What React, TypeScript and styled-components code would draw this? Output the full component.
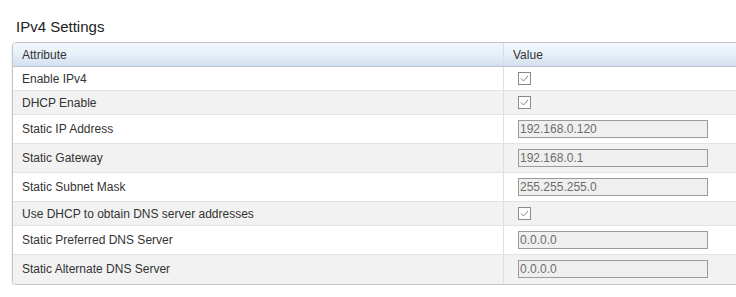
import { createGlobalStyle } from 'styled-components';
import styled from 'styled-components';

type Row =
  | { label: string; kind: 'check' }
  | { label: string; kind: 'text'; value: string };

const rows: Row[] = [
  { label: 'Enable IPv4', kind: 'check' },
  { label: 'DHCP Enable', kind: 'check' },
  { label: 'Static IP Address', kind: 'text', value: '192.168.0.120' },
  { label: 'Static Gateway', kind: 'text', value: '192.168.0.1' },
  { label: 'Static Subnet Mask', kind: 'text', value: '255.255.255.0' },
  { label: 'Use DHCP to obtain DNS server addresses', kind: 'check' },
  { label: 'Static Preferred DNS Server', kind: 'text', value: '0.0.0.0' },
  { label: 'Static Alternate DNS Server', kind: 'text', value: '0.0.0.0' },
];

export default function App() {
  return (
    <>
      <GlobalStyle />
      <Page>
        <Title>IPv4 Settings</Title>
        <TableBox>
          <Table>
            <thead>
              <tr>
                <HeadCell $first>Attribute</HeadCell>
                <HeadCell>Value</HeadCell>
              </tr>
            </thead>
            <tbody>
              {rows.map((row, i) => (
                <BodyRow key={row.label} $odd={i % 2 === 1} $tall={row.kind === 'text'}>
                  <LabelCell>{row.label}</LabelCell>
                  <ValueCell>
                    {row.kind === 'check' ? (
                      <CheckBox>
                        <svg width="9" height="7" viewBox="0 0 9 7">
                          <path d="M1 3.5 L3.5 6 L8 1" fill="none" stroke="#858585" strokeWidth="1" />
                        </svg>
                      </CheckBox>
                    ) : (
                      <ValueInput value={row.value} disabled readOnly />
                    )}
                  </ValueCell>
                </BodyRow>
              ))}
            </tbody>
          </Table>
        </TableBox>
      </Page>
    </>
  );
}

const GlobalStyle = createGlobalStyle`
  html, body {
    margin: 0;
    padding: 0;
    background: #ffffff;
    overflow: hidden;
  }
  body {
    font-family: "Liberation Sans", Arial, sans-serif;
    color: #333333;
  }
`;

const Page = styled.div`
  width: 736px;
  overflow: hidden;
  padding: 18px 0 0 12px;
  box-sizing: border-box;
`;

const Title = styled.h2`
  margin: 0 0 6px 4px;
  font-size: 15px;
  font-weight: normal;
  line-height: 18px;
  color: #222222;
`;

const TableBox = styled.div`
  width: 770px;
  border: 1px solid #c4c4c4;
  border-radius: 4px;
  overflow: hidden;
  box-shadow: 0 1px 2px rgba(0, 0, 0, 0.15);
`;

const Table = styled.table`
  width: 100%;
  border-collapse: collapse;
  table-layout: fixed;
  font-size: 12px;
`;

const HeadCell = styled.th<{ $first?: boolean }>`
  width: ${({ $first }) => ($first ? '481px' : 'auto')};
  height: 23px;
  padding: 0 0 0 9px;
  text-align: left;
  font-weight: normal;
  color: #333333;
  background: linear-gradient(to bottom, #f1f7fd 0%, #e6eff9 50%, #d3e0ee 100%);
  border-bottom: 1px solid #bcc6d2;
  border-right: ${({ $first }) => ($first ? '1px solid #d8dde3' : 'none')};
`;

const BodyRow = styled.tr<{ $odd: boolean; $tall: boolean }>`
  height: ${({ $tall }) => ($tall ? '29px' : '24px')};
  background: ${({ $odd }) => ($odd ? '#f2f2f2' : '#ffffff')};
  border-bottom: 1px solid #e2e2e2;

  &:last-child {
    border-bottom: none;
  }
`;

const LabelCell = styled.td`
  padding: 0 0 0 9px;
  border-right: 1px solid #e0e0e0;
  white-space: nowrap;
`;

const ValueCell = styled.td`
  padding: 0 0 0 14px;
`;

const CheckBox = styled.span`
  display: flex;
  align-items: center;
  justify-content: center;
  box-sizing: border-box;
  width: 13px;
  height: 13px;
  border: 1px solid #8a8a8a;
  background: #ffffff;
`;

const ValueInput = styled.input`
  display: block;
  box-sizing: border-box;
  width: 190px;
  height: 18px;
  margin: 0;
  padding: 0 1px;
  border: 1px solid #9a9a9a;
  background: #efefef;
  font-family: "Liberation Sans", Arial, sans-serif;
  font-size: 12px;
  color: #6d6d6d;
  -webkit-text-fill-color: #6d6d6d;
  opacity: 1;
`;
